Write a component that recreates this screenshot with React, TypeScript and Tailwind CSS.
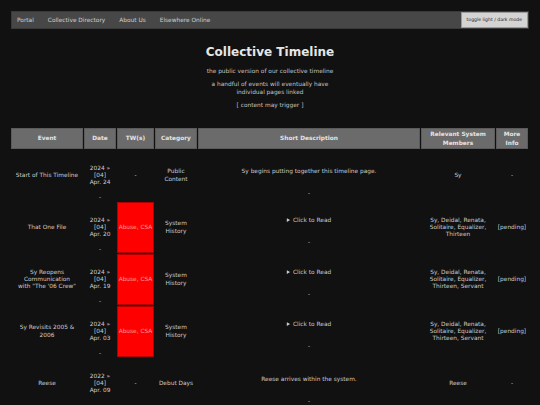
import React from 'react';

type Row = {
  event: string[];
  date: string[];
  tw: string | null;
  category: string[];
  desc: { kind: 'text' | 'click'; text: string };
  members: string[];
  more: string;
};

const rows: Row[] = [
  {
    event: ['Start of This Timeline'],
    date: ['2024 »', '[04]', 'Apr. 24'],
    tw: null,
    category: ['Public', 'Content'],
    desc: { kind: 'text', text: 'Sy begins putting together this timeline page.' },
    members: ['Sy'],
    more: '-',
  },
  {
    event: ['That One File'],
    date: ['2024 »', '[04]', 'Apr. 20'],
    tw: 'Abuse, CSA',
    category: ['System', 'History'],
    desc: { kind: 'click', text: 'Click to Read' },
    members: ['Sy, Deidal, Renata,', 'Solitaire, Equalizer,', 'Thirteen'],
    more: '[pending]',
  },
  {
    event: ['Sy Reopens', 'Communication', 'with "The \'06 Crew"'],
    date: ['2024 »', '[04]', 'Apr. 19'],
    tw: 'Abuse, CSA',
    category: ['System', 'History'],
    desc: { kind: 'click', text: 'Click to Read' },
    members: ['Sy, Deidal, Renata,', 'Solitaire, Equalizer,', 'Thirteen, Servant'],
    more: '[pending]',
  },
  {
    event: ['Sy Revisits 2005 &', '2006'],
    date: ['2024 »', '[04]', 'Apr. 03'],
    tw: 'Abuse, CSA',
    category: ['System', 'History'],
    desc: { kind: 'click', text: 'Click to Read' },
    members: ['Sy, Deidal, Renata,', 'Solitaire, Equalizer,', 'Thirteen, Servant'],
    more: '[pending]',
  },
  {
    event: ['Reese'],
    date: ['2022 »', '[04]', 'Apr. 09'],
    tw: null,
    category: ['Debut Days'],
    desc: { kind: 'text', text: 'Reese arrives within the system.' },
    members: ['Reese'],
    more: '-',
  },
];

const cols = 'grid grid-cols-[72px_32px_37px_42px_222px_74px_32px] gap-px';

function Lines({ lines }: { lines: string[] }) {
  return (
    <div className="flex flex-col items-center text-center leading-[7.3px] whitespace-nowrap">
      {lines.map((l, i) => (
        <span key={i}>{l}</span>
      ))}
    </div>
  );
}

function Cell({ children }: { children: React.ReactNode }) {
  return <div className="flex flex-col items-center justify-center">{children}</div>;
}

export default function App() {
  return (
    <div className="min-h-screen bg-[#111111] text-[#cccccc] font-['DejaVu_Sans',Verdana,sans-serif] text-[5.85px] pt-[11px] px-[11px]">
      {/* Nav */}
      <nav className="flex items-stretch justify-between h-[18px] bg-[#474747] border border-[#3a3a3a]">
        <div className="flex items-center gap-[14px] pl-[5px] text-[#d0d0d0]">
          <a>Portal</a>
          <a>Collective Directory</a>
          <a>About Us</a>
          <a>Elsewhere Online</a>
        </div>
        <button className="px-[5px] bg-[#d4d4d4] border border-[#9a9a9a] text-[#222] text-[4.6px] font-['DejaVu_Sans',sans-serif]">
          toggle light / dark mode
        </button>
      </nav>

      {/* Header */}
      <header className="flex flex-col items-center text-center">
        <h1 className="mt-[16px] text-[12px] font-bold text-[#e6e6e6] leading-[14px]">Collective Timeline</h1>
        <p className="mt-[9px] text-[#c4c4c4] leading-[7.3px]">the public version of our collective timeline</p>
        <p className="mt-[6px] text-[#c4c4c4] leading-[7.3px]">
          a handful of events will eventually have
          <br />
          individual pages linked
        </p>
        <p className="mt-[6px] text-[#c4c4c4] leading-[7.3px]">[ content may trigger ]</p>
      </header>

      {/* Table */}
      <div className="mt-[19px]">
        <div className={`${cols} h-[21px] font-bold text-[#e4e4e4]`}>
          {['Event', 'Date', 'TW(s)', 'Category', 'Short Description'].map((h) => (
            <div key={h} className="flex items-center justify-center bg-[#6b6b6b] border border-[#5b5b5b]">
              {h}
            </div>
          ))}
          <div className="flex flex-col items-center justify-center bg-[#6b6b6b] border border-[#5b5b5b] leading-[8.4px] text-center">
            <span>Relevant System</span>
            <span>Members</span>
          </div>
          <div className="flex flex-col items-center justify-center bg-[#6b6b6b] border border-[#5b5b5b] leading-[8.4px] text-center">
            <span>More</span>
            <span>Info</span>
          </div>
        </div>

        <div className="flex flex-col gap-px mt-px">
          {rows.map((r, i) => (
            <div key={i} className={`${cols} h-[51px]`}>
              <Cell>
                <Lines lines={r.event} />
              </Cell>

              {/* date with trailing dash */}
              <div className="flex flex-col items-center justify-center pt-[14.3px]">
                <Lines lines={r.date} />
                <span className="mt-[7px] leading-[7.3px]">-</span>
              </div>

              {r.tw ? (
                <div className="flex items-center justify-center bg-[#ff0000] border border-[#b00000] text-[#ff9a9a] whitespace-nowrap">
                  {r.tw}
                </div>
              ) : (
                <Cell>-</Cell>
              )}

              <Cell>
                <Lines lines={r.category} />
              </Cell>

              <div
                className={`flex flex-col items-center leading-[7.3px] ${
                  r.desc.kind === 'text' ? 'pt-[18.3px]' : 'pt-[15px]'
                }`}
              >
                {r.desc.kind === 'text' ? (
                  <span>{r.desc.text}</span>
                ) : (
                  <details>
                    <summary className="cursor-pointer">{r.desc.text}</summary>
                  </details>
                )}
                <span className="mt-[14.3px]">-</span>
              </div>

              <Cell>
                <Lines lines={r.members} />
              </Cell>

              <Cell>{r.more}</Cell>
            </div>
          ))}
        </div>
      </div>
    </div>
  );
}
